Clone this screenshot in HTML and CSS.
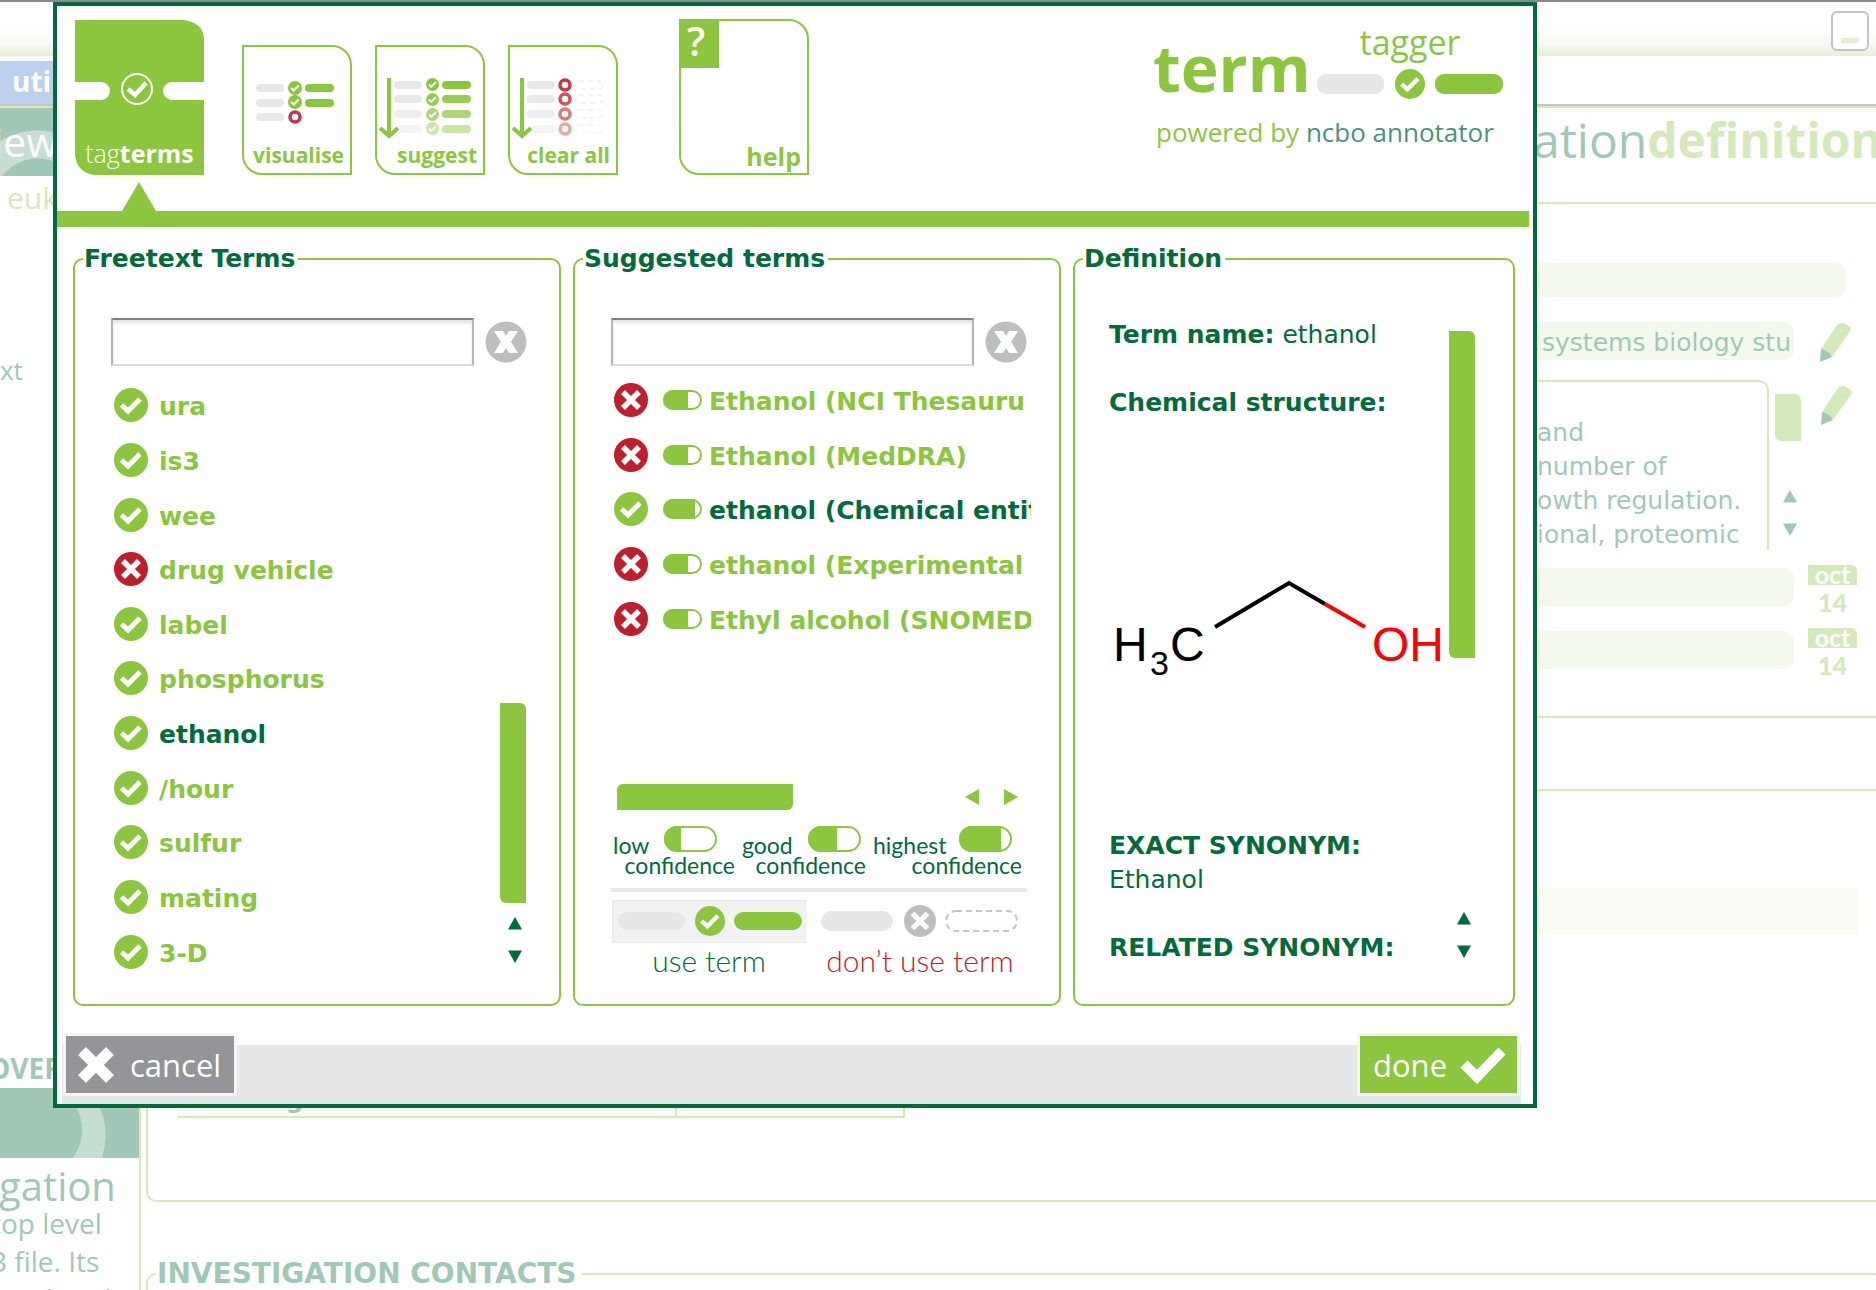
FILE: index.html
```html
<!DOCTYPE html>
<html lang="en">
<head>
<meta charset="utf-8">
<title>Term tagger</title>
<link rel="stylesheet" href="styles.css">
</head>
<body>
<svg class="defs" aria-hidden="true">
  <symbol id="tick" viewBox="0 0 34 34"><circle cx="17" cy="17" r="17" fill="#8cc63f"/><path d="M7.500 17L14 23L26 11" fill="none" stroke="#fff" stroke-width="5"/></symbol>
  <symbol id="cross" viewBox="0 0 34 34"><circle cx="17" cy="17" r="17" fill="currentColor"/><path d="M9 9L25 25M25 9L9 25" fill="none" stroke="#fff" stroke-width="5.500"/></symbol>
  <symbol id="clear" viewBox="0 0 42 42"><circle cx="21" cy="21" r="20.500" fill="#bcbec0"/><path d="M9 10h9l3 5 3-5h9l-7 11 7 11h-9l-3-5-3 5H9l7-11z" fill="#fff"/></symbol>
  <symbol id="pill-good" viewBox="0 0 39 20"><rect x="1" y="1" width="37" height="18" rx="9" fill="#fff" stroke="#8cc63f" stroke-width="2"/><path d="M25 0H10a10 10 0 0 0 0 20h15z" fill="#8cc63f"/></symbol>
  <symbol id="pill-best" viewBox="0 0 39 20"><rect x="1" y="1" width="37" height="18" rx="9" fill="#fff" stroke="#8cc63f" stroke-width="2"/><path d="M32 0H10a10 10 0 0 0 0 20h22z" fill="#8cc63f"/></symbol>
  <symbol id="pencil" viewBox="0 0 31 40"><path d="M1 27L17 3Q21-2 30 5Q32 7 29 11L12 35z" fill="#d5eabb"/><path d="M1 27Q8 28 12 35L0 40z" fill="#a1c8b6"/></symbol>
  <symbol id="up" viewBox="0 0 26 28"><path d="M15 7l7 12.500H8z" fill="currentColor"/></symbol>
  <symbol id="down" viewBox="0 0 26 28"><path d="M15 25l7-12.500H8z" fill="currentColor"/></symbol>
</svg>

<div class="app">
  <header class="titlebar"><button class="minimise" aria-label="Minimise"></button></header>
  <nav class="menubar"><a href="#" class="menu-item">uti</a></nav>
  <div class="workspace">
    <aside class="sidebar">
      <div class="side-head">iew</div>
      <p class="side-organism">euk</p>
      <p class="side-note">xt</p>
      <h2 class="side-title">OVER</h2>
      <svg class="side-art" viewBox="0 0 139 71" preserveAspectRatio="none" aria-hidden="true"><rect width="139" height="71" fill="#a1c8b6"/><path d="M62 0Q96 36 73 71H102Q114 30 86 0z" fill="#c7ded3"/></svg>
      <h3 class="side-topic">gation</h3>
      <p class="side-text">top level<br>3 file. Its<br>is related</p>
    </aside>
    <main class="main">
      <h1 class="page-title"><span>ation</span><b>definition</b></h1>
      <section class="box-details">
        <div class="details">
          <div class="bar bar-wide"></div>
          <div class="row"><div class="bar">systems biology stu</div><svg class="pencil"><use href="#pencil"/></svg></div>
          <div class="row row-text">
            <p class="abstract">and<br>number of<br>owth regulation.<br>ional, proteomic</p>
            <div class="mini-scroll"><div class="mini-thumb"></div>
              <button aria-label="Scroll up"><svg><use href="#up"/></svg></button><button aria-label="Scroll down"><svg><use href="#down"/></svg></button></div>
            <svg class="pencil"><use href="#pencil"/></svg>
          </div>
          <div class="row row-date"><div class="bar"></div><div class="calendar"><span>oct</span><b>14</b></div></div>
          <div class="row row-date"><div class="bar"></div><div class="calendar"><span>oct</span><b>14</b></div></div>
        </div>
      </section>
      <section class="box-publications">
        <div class="band"></div>
        <div class="grid-foot"><span>Investigation</span><span></span></div>
      </section>
      <fieldset class="box-contacts"><legend>INVESTIGATION CONTACTS</legend></fieldset>
    </main>
  </div>

  <div class="dialog" role="dialog" aria-label="Term tagger">
    <header class="dialog-head">
      <button class="tab-current">
        <svg viewBox="0 0 129 155" aria-hidden="true"><path d="M0 0H109Q129 3 129 20V62H97a9 9 0 0 0 0 18H129V155H20Q2 153 0 135V80H26a9 9 0 0 0 0-18H0z" fill="#8cc63f"/><circle cx="62" cy="69" r="15" fill="none" stroke="#fff" stroke-width="2"/><path d="M53 69l7 6 11-12" fill="none" stroke="#fff" stroke-width="4.500"/></svg>
        <span>tag<b>terms</b></span>
      </button>
      <button class="tool">
        <svg viewBox="2 2 106 96" aria-hidden="true"><g fill="#e6e7e8"><rect x="14" y="39" width="28" height="8" rx="4"/><rect x="14" y="54" width="28" height="8" rx="4"/><rect x="14" y="68" width="28" height="8" rx="4"/></g><g fill="#8cc63f"><rect x="63" y="39" width="29" height="8" rx="4"/><rect x="63" y="54" width="29" height="8" rx="4"/></g><use href="#tick" x="46" y="36" width="14" height="14"/><use href="#tick" x="46" y="50" width="14" height="14"/><circle cx="53" cy="72" r="5" fill="none" stroke="#c8354a" stroke-width="3.500"/></svg>
        <span>visualise</span>
      </button>
      <button class="tool">
        <svg viewBox="2 2 106 96" aria-hidden="true"><path d="M14 33V92M5 83l9 8 9-8" fill="none" stroke="#8cc63f" stroke-width="4"/><g><rect x="19" y="36" width="28" height="8" rx="4" fill="#e6e7e8"/><rect x="67" y="36" width="29" height="8" rx="4" fill="#8cc63f"/><use href="#tick" x="51" y="33" width="13" height="13"/></g><g opacity=".9"><rect x="19" y="50" width="28" height="8" rx="4" fill="#e6e7e8"/><rect x="67" y="50" width="29" height="8" rx="4" fill="#8cc63f"/><use href="#tick" x="51" y="48" width="13" height="13"/></g><g opacity=".7"><rect x="19" y="65" width="28" height="8" rx="4" fill="#e6e7e8"/><rect x="67" y="65" width="29" height="8" rx="4" fill="#8cc63f"/><use href="#tick" x="51" y="63" width="13" height="13"/></g><g opacity=".45"><rect x="24" y="80" width="23" height="8" rx="4" fill="#e6e7e8"/><rect x="67" y="80" width="29" height="8" rx="4" fill="#8cc63f"/><use href="#tick" x="51" y="77" width="13" height="13"/></g></svg>
        <span>suggest</span>
      </button>
      <button class="tool">
        <svg viewBox="2 2 106 96" aria-hidden="true"><path d="M14 33V92M5 83l9 8 9-8" fill="none" stroke="#8cc63f" stroke-width="4"/><g fill="#e6e7e8"><rect x="19" y="36" width="28" height="8" rx="4"/><rect x="19" y="50" width="28" height="8" rx="4" opacity=".9"/><rect x="19" y="65" width="28" height="8" rx="4" opacity=".7"/><rect x="24" y="80" width="23" height="8" rx="4" opacity=".45"/></g><g fill="none" stroke="#c8354a" stroke-width="3.500"><circle cx="57" cy="40" r="5"/><circle cx="57" cy="54" r="5" stroke="#d2525a"/><circle cx="57" cy="69" r="5" stroke="#dc7c74"/><circle cx="57" cy="84" r="5" stroke="#e8a99c"/></g><g fill="none" stroke="#e6e7e8" stroke-dasharray="5 4"><rect x="67" y="36" width="28" height="8" rx="4"/><rect x="67" y="50" width="28" height="8" rx="4"/><rect x="67" y="65" width="28" height="8" rx="4" opacity=".8"/><rect x="67" y="80" width="28" height="8" rx="4" opacity=".6"/></g></svg>
        <span>clear all</span>
      </button>
      <button class="tool help"><i>?</i><span>help</span></button>
      <div class="logo">
        <div class="logo-top">
          <span class="logo-term">term</span>
          <div class="logo-side"><span class="logo-tagger">tagger</span>
            <svg viewBox="0 0 186 32" aria-hidden="true"><rect y="6" width="67" height="20" rx="9" fill="#e6e7e8"/><use href="#tick" x="78" y="1" width="30" height="30"/><rect x="118" y="6" width="68" height="20" rx="9" fill="#8cc63f"/></svg></div>
        </div>
        <p class="logo-by">powered by <span>ncbo annotator</span></p>
      </div>
    </header>
    <div class="divider"></div>

    <div class="panels">
      <fieldset class="panel">
        <legend>Freetext Terms</legend>
        <div class="search"><input type="text" aria-label="Filter freetext terms"><button aria-label="Clear filter"><svg><use href="#clear"/></svg></button></div>
        <div class="terms-wrap">
          <ul class="terms">
            <li><button><svg><use href="#tick"/></svg><span>ura</span></button></li>
            <li><button><svg><use href="#tick"/></svg><span>is3</span></button></li>
            <li><button><svg><use href="#tick"/></svg><span>wee</span></button></li>
            <li><button><svg><use href="#cross"/></svg><span>drug vehicle</span></button></li>
            <li><button><svg><use href="#tick"/></svg><span>label</span></button></li>
            <li><button><svg><use href="#tick"/></svg><span>phosphorus</span></button></li>
            <li class="selected"><button><svg><use href="#tick"/></svg><span>ethanol</span></button></li>
            <li><button><svg><use href="#tick"/></svg><span>/hour</span></button></li>
            <li><button><svg><use href="#tick"/></svg><span>sulfur</span></button></li>
            <li><button><svg><use href="#tick"/></svg><span>mating</span></button></li>
            <li><button><svg><use href="#tick"/></svg><span>3-D</span></button></li>
          </ul>
          <div class="scroller scroller-low"><div class="thumb thumb-short"></div>
            <div class="arrows"><button aria-label="Scroll up"><svg><use href="#up"/></svg></button><button aria-label="Scroll down"><svg><use href="#down"/></svg></button></div></div>
        </div>
      </fieldset>

      <fieldset class="panel">
        <legend>Suggested terms</legend>
        <div class="search"><input type="text" aria-label="Filter suggested terms"><button aria-label="Clear filter"><svg><use href="#clear"/></svg></button></div>
        <ul class="terms suggestions">
          <li><button><svg><use href="#cross"/></svg><svg class="pill"><use href="#pill-good"/></svg><span>Ethanol (NCI Thesauru</span></button></li>
          <li><button><svg><use href="#cross"/></svg><svg class="pill"><use href="#pill-good"/></svg><span>Ethanol (MedDRA)</span></button></li>
          <li class="selected"><button><svg><use href="#tick"/></svg><svg class="pill"><use href="#pill-best"/></svg><span>ethanol (Chemical entit</span></button></li>
          <li><button><svg><use href="#cross"/></svg><svg class="pill"><use href="#pill-good"/></svg><span>ethanol (Experimental</span></button></li>
          <li><button><svg><use href="#cross"/></svg><svg class="pill"><use href="#pill-good"/></svg><span>Ethyl alcohol (SNOMED</span></button></li>
        </ul>
        <div class="hscroll"><div class="hthumb"></div>
          <button aria-label="Scroll left"><svg viewBox="0 0 14 16"><path d="M0 8L14 0V16z" fill="#8cc63f"/></svg></button>
          <button aria-label="Scroll right"><svg viewBox="0 0 14 16"><path d="M14 8L0 0V16z" fill="#8cc63f"/></svg></button></div>
        <div class="key">
          <div class="key-item key-low"><div class="key-row"><span>low</span><svg viewBox="0 0 53 26"><rect x="1" y="1" width="51" height="24" rx="12" fill="#fff" stroke="#8cc63f" stroke-width="2"/><path d="M17 0H13a13 13 0 0 0 0 26h4z" fill="#8cc63f"/></svg></div><span>confidence</span></div>
          <div class="key-item key-good"><div class="key-row"><span>good</span><svg viewBox="0 0 53 26"><rect x="1" y="1" width="51" height="24" rx="12" fill="#fff" stroke="#8cc63f" stroke-width="2"/><path d="M29 0H13a13 13 0 0 0 0 26h16z" fill="#8cc63f"/></svg></div><span>confidence</span></div>
          <div class="key-item"><div class="key-row"><span>highest</span><svg viewBox="0 0 53 26"><rect x="1" y="1" width="51" height="24" rx="12" fill="#fff" stroke="#8cc63f" stroke-width="2"/><path d="M42 0H13a13 13 0 0 0 0 26h29z" fill="#8cc63f"/></svg></div><span>confidence</span></div>
        </div>
        <hr class="key-line">
        <div class="choices">
          <figure><svg viewBox="0 0 194 43" aria-hidden="true"><rect x=".500" y=".500" width="193" height="42" fill="#f2f2f2" stroke="#e9e9ea"/><rect x="6" y="12" width="67" height="18" rx="9" fill="#e6e7e8"/><use href="#tick" x="83" y="6" width="30" height="30"/><rect x="122" y="12" width="68" height="18" rx="9" fill="#8cc63f"/></svg><figcaption>use term</figcaption></figure>
          <figure class="dont"><svg viewBox="0 0 198 43" aria-hidden="true"><rect y="11" width="72" height="20" rx="10" fill="#e6e7e8"/><use href="#cross" x="83" y="5" width="32" height="32" color="#bcbec0"/><rect x="125" y="11" width="71" height="20" rx="10" fill="none" stroke="#c4c5c7" stroke-width="2" stroke-dasharray="6 4"/></svg><figcaption>don’t use term</figcaption></figure>
        </div>
      </fieldset>

      <fieldset class="panel panel-definition">
        <legend>Definition</legend>
        <div class="definition">
          <p><b>Term name:</b> ethanol</p>
          <p class="spaced"><b>Chemical structure:</b></p>
          <svg class="molecule" viewBox="0 0 340 409" role="img" aria-label="Structure of ethanol">
            <path d="M106 207L180 163L216 184" fill="none" stroke="#000" stroke-width="4"/><path d="M216 184L256 207" stroke="#f00" stroke-width="4"/>
            <text x="4" y="241" font-size="48">H</text><text x="41" y="255" font-size="34">3</text><text x="61" y="241" font-size="48">C</text><text x="263" y="241" font-size="48" fill="#f00">OH</text>
          </svg>
          <p><b>EXACT SYNONYM:</b></p>
          <p>Ethanol</p>
          <p class="spaced"><b>RELATED SYNONYM:</b></p>
        </div>
        <div class="scroller"><div class="thumb thumb-long"></div>
          <div class="arrows"><button aria-label="Scroll up"><svg><use href="#up"/></svg></button><button aria-label="Scroll down"><svg><use href="#down"/></svg></button></div></div>
      </fieldset>
    </div>

    <footer class="dialog-foot">
      <button class="cancel"><svg viewBox="0 0 38 38" aria-hidden="true"><path d="M5 5L33 33M33 5L5 33" stroke="#fff" stroke-width="11"/></svg>cancel</button>
      <button class="done">done<svg viewBox="0 0 46 38" aria-hidden="true"><path d="M4 18L17 31L42 5" fill="none" stroke="#fff" stroke-width="10"/></svg></button>
    </footer>
  </div>
</div>
</body>
</html>
```

FILE: styles.css
```css
:root {
  --dark: #036b3b;
  --green: #8cc63f;
  --faded-dark: #a1c8b6;
  --faded-green: #d5eabb;
  --faded-fill: #f4f9ee;
  --human: "Open Sans", "Noto Sans", sans-serif;
  --wide: "DejaVu Sans", "Liberation Sans", sans-serif;
}
* { box-sizing: border-box; }
body { margin: 0; background: #fff; font-family: var(--wide); font-size: 25px; }
h1, h2, h3, p, ul, figure { margin: 0; padding: 0; }
button { padding: 0; border: 0; background: none; font: inherit; color: inherit; cursor: pointer; }
svg { display: block; flex: none; }
fieldset { margin: 0; min-width: 0; }
.defs { position: absolute; width: 0; height: 0; }

/* Faded application behind the dialog */
.app { position: relative; display: flex; flex-direction: column; height: 100vh; min-height: 1120px; overflow: hidden; }
.titlebar { flex: none; display: flex; justify-content: flex-end; align-items: flex-start; height: 56px; padding: 9px 7px 0 0; border-top: 2px solid #8a8a8a; background: linear-gradient(#fff 45%, #f8f9f6 75%, #e4f1d6); }
.minimise { display: flex; justify-content: center; align-items: flex-end; width: 38px; height: 40px; padding-bottom: 6px; border: 2px solid #c4c4c4; border-radius: 6px; background: #fff; }
.minimise::after { content: ""; width: 18px; height: 5px; background: #e2f0d2; }
.menubar { flex: none; display: flex; height: 52px; padding-top: 5px; border-bottom: 2px solid var(--faded-green); box-shadow: inset 0 -2px #c6c6c6; }
.menu-item { width: 120px; height: 43px; padding-left: 12px; background: #bcd1ee; color: #fff; font: bold 28px/40px var(--human); text-decoration: none; }
.workspace { flex: 1; display: flex; min-height: 0; }
.sidebar { flex: none; width: 141px; border-right: 2px solid var(--faded-green); color: var(--faded-dark); font-family: var(--human); overflow: hidden; }
.side-head { height: 68px; background: radial-gradient(circle at 38px 96px, #a1c8b6 45px, #c7ded3 46px 73px, #a1c8b6 74px); color: #fff; font-size: 41px; line-height: 66px; text-indent: -7px; }
.side-organism { padding: 2px 0 0 7px; color: var(--faded-green); font-size: 30px; line-height: 40px; }
.side-note { padding-top: 132px; font: 26px/40px var(--human); }
.side-title { padding-top: 658px; font-size: 28px; line-height: 40px; text-indent: -12px; }
.side-art { width: 100%; height: 70px; }
.side-topic { padding-top: 6px; font-size: 40px; font-weight: normal; line-height: 44px; text-indent: -1px; }
.side-text { margin: -4px 0 0 -9px; font-size: 28px; line-height: 38px; }
.main { flex: 1; min-width: 0; padding-left: 5px; }
.page-title { display: flex; justify-content: flex-start; width: 343px; margin-left: auto; height: 94px; font: 48px/64px var(--human); color: var(--faded-dark); white-space: nowrap; }
.page-title b { color: var(--faded-green); }
.box-details { height: 516px; border: solid var(--faded-green); border-width: 2px 0 2px 2px; }
.details { display: flex; flex-direction: column; width: 345px; margin-left: auto; padding-top: 59px; }
.row { display: flex; margin-top: 25px; }
.bar { width: 263px; height: 38px; padding-left: 11px; border-radius: 10px; background: var(--faded-fill); color: var(--faded-dark); font-size: 25px; line-height: 42px; white-space: nowrap; overflow: hidden; }
.bar-wide { width: 315px; height: 34px; }
.pencil { width: 31px; height: 40px; margin-left: 26px; }
.row-text { height: 170px; margin-top: 18px; }
.abstract { width: 238px; padding: 34px 0 0 6px; border: solid var(--faded-green); border-width: 2px 2px 0 0; border-radius: 0 10px 0 0; color: var(--faded-dark); font-size: 25px; line-height: 34px; white-space: nowrap; }
.mini-scroll { display: flex; flex-direction: column; width: 26px; margin: 14px -6px 0 6px; color: var(--faded-dark); }
.mini-scroll svg { width: 26px; height: 28px; }
.mini-thumb { height: 47px; margin-bottom: 42px; border-radius: 0 6px 0 6px; background: var(--faded-green); }
.row-text .pencil { margin-top: 5px; }
.row-date { margin-top: 18px; height: 45px; }
.calendar { width: 49px; margin: -3px 0 0 14px; color: var(--faded-green); font: bold 25px/24px Lato, var(--human); text-align: center; }
.calendar span { display: block; height: 20px; border-radius: 0 6px 0 0; background: var(--faded-green); color: #fff; line-height: 18px; }
.calendar b { display: block; line-height: 34px; }
.box-publications { display: flex; flex-direction: column; height: 413px; margin-top: 71px; border: solid var(--faded-green); border-width: 2px 0 2px 2px; border-radius: 0 0 0 10px; }
.band { width: 350px; height: 47px; margin: 97px 18px 0 auto; background: #f9fbf5; }
.grid-foot { display: grid; grid-template-columns: 500px 226px; width: 728px; height: 80px; margin: auto 0 82px 29px; border-right: 2px solid var(--faded-green); border-bottom: 2px solid var(--faded-green); background: #f9fbf5; color: var(--faded-dark); font: bold 25px/32px var(--wide); align-items: end; }
.grid-foot span { height: 100%; padding: 46px 0 0 13px; border-right: 2px solid var(--faded-green); }
.grid-foot span + span { border: 0; }
.box-contacts { margin-top: 56px; padding: 0; height: 90px; border: solid var(--faded-green); border-width: 2px 0 2px 2px; border-radius: 10px 0 0 10px; }
.box-contacts legend { margin-left: 8px; padding: 0 5px 0 1px; color: var(--faded-dark); font-size: 28px; font-weight: bold; line-height: 32px; }

/* Dialog */
.dialog { position: absolute; top: 2px; left: 53px; right: 339px; border: 4px solid var(--dark); background: #fff; color: var(--dark); }
.dialog-head { display: flex; align-items: flex-end; padding: 13px 30px 36px 18px; }
.tab-current { position: relative; display: flex; flex-direction: column; align-items: center; width: 129px; height: 155px; color: #fff; }
.tab-current svg { width: 129px; height: 155px; margin-bottom: -38px; }
.tab-current span { font: 300 25px/32px var(--human); }
.tab-current b { font-weight: 700; }
.tab-current::after { content: ""; position: absolute; top: 162px; left: 47px; border: solid transparent; border-width: 0 17px 29px; border-bottom-color: var(--green); }
.tool { width: 110px; height: 130px; margin-left: 23px; padding-right: 6px; border: 2px solid var(--green); border-radius: 0 20px 0 20px; color: var(--green); font: bold 21px/24px var(--human); text-align: right; }
.tab-current + .tool { margin-left: 38px; }
.tool svg { width: 106px; height: 96px; }
.tool span { display: block; padding-bottom: 6px; }
.help { display: flex; flex-direction: column; justify-content: space-between; width: 130px; height: 156px; margin-left: 61px; font-size: 25px; line-height: 28px; }
.help i { width: 40px; height: 49px; margin: -2px 0 0 -2px; padding-right: 6px; background: var(--green); color: #fff; font: 600 40px/44px var(--human); text-align: center; }
.tool.help span { align-self: flex-end; padding-bottom: 3px; }
.logo { align-self: flex-start; margin: 2px 0 0 auto; font-family: var(--human); color: var(--green); }
.logo-top { display: flex; align-items: flex-end; justify-content: space-between; width: 350px; }
.logo-term { font-size: 64px; font-weight: 700; line-height: 64px; }
.logo-side { display: flex; flex-direction: column; align-items: center; }
.logo-tagger { font-size: 34px; line-height: 42px; }
.logo-side svg { width: 186px; height: 32px; margin-top: 5px; }
.logo-by { margin-top: 16px; padding-left: 3px; font-size: 26px; line-height: 32px; white-space: nowrap; }
.logo-by span { color: #4d9375; }
.divider { height: 16px; margin-right: 4px; background: var(--green); }

.panels { display: grid; grid-template-columns: 488fr 488fr 442fr; gap: 12px; padding: 18px 18px 0 16px; }
.panel { display: flex; flex-direction: column; padding: 45px 32px 25px 36px; border: 2px solid var(--green); border-radius: 10px; }
.panel legend { margin-left: -28px; padding: 0 3px 0 1px; font-weight: bold; line-height: 28px; }
.search { display: flex; align-items: center; gap: 11px; }
.search input { flex: 1; min-width: 0; height: 48px; padding: 0 8px; border: 2px solid; border-color: #7f7f7f #b5b5b5 #dcdcdc; box-shadow: inset 0 3px 3px #e4e4e4; font: inherit; color: var(--dark); }
.search svg { width: 42px; height: 42px; }
.terms-wrap { display: flex; margin-top: 12px; }
.terms { flex: 1; display: grid; grid-auto-rows: 1fr; min-width: 0; height: 601px; list-style: none; color: var(--green); font-size: 25px; font-weight: bold; line-height: 30px; }
.terms li { display: flex; min-width: 0; overflow: hidden; }
.terms button { display: flex; align-items: center; gap: 11px; padding-left: 3px; white-space: nowrap; }
.terms svg { width: 34px; height: 34px; color: #be1e2d; }
.terms span { padding-top: 4px; }
.terms .selected { color: var(--dark); }
.suggestions { flex: none; height: 273px; margin: 7px -4px 0 0; }
.suggestions button { gap: 0; }
.terms .pill { width: 39px; height: 20px; margin: 0 7px 0 15px; }
.scroller { flex: none; display: flex; flex-direction: column; width: 26px; }
.scroller-low { margin-right: 1px; padding-bottom: 13px; }
.scroller-low .thumb { margin-top: auto; }
.thumb { background: var(--green); border-radius: 0 6px 0 6px; }
.thumb-short { height: 200px; }
.thumb-long { height: 327px; margin-top: 13px; }
.arrows { padding-top: 7px; }
.arrows button, .mini-scroll button { display: block; }
.arrows svg { width: 26px; height: 28px; }
.hscroll { display: flex; align-items: center; height: 26px; margin: auto 9px 0 6px; }
.hthumb { width: 176px; height: 26px; margin-right: auto; border-radius: 6px 0 6px 0; background: var(--green); }
.hscroll button + button { margin-left: 25px; }
.hscroll svg { width: 14px; height: 16px; }
.key { display: flex; justify-content: space-between; margin: 15px 5px 0 2px; font: 23px/24px Lato, var(--human); }
.key-item { display: flex; flex-direction: column; align-items: flex-end; width: 149px; }
.key-low { width: 122px; }
.key-good { width: 124px; }
.key-row { display: flex; justify-content: space-between; align-items: flex-end; align-self: stretch; height: 28px; padding-right: 10px; line-height: 16px; }
.key-low .key-row { padding-right: 18px; }
.key-good .key-row { padding-right: 5px; }
.key-row svg { width: 53px; height: 26px; align-self: center; }
.key-line { width: 100%; height: 4px; margin: 11px 0 8px; border: 0; background: #e6e7e8; }
.choices { display: flex; justify-content: space-between; margin: 0 8px 2px 1px; color: var(--dark); font: 300 30px/34px Lato, var(--human); text-align: center; }
.choices figure:first-child svg { width: 194px; height: 43px; }
.dont svg { width: 198px; height: 43px; }
.dont { color: #be1e2d; }
.panel-definition { flex-direction: row; padding: 45px 38px 26px 34px; }
.panel-definition legend { margin-left: -26px; }
.definition { flex: 1; min-width: 0; line-height: 34px; }
.spaced { margin-top: 34px; }
.molecule { width: 340px; height: 409px; font-family: "Liberation Sans", Arial, sans-serif; }
.panel-definition .arrows { margin-top: auto; padding-bottom: 17px; }

.dialog-foot { display: flex; justify-content: space-between; height: 59px; margin: 39px 12px 0 5px; padding: 0 4px; background: #e6e7e8; }
.dialog-foot button { display: flex; align-items: center; height: 57px; margin-top: -9px; box-shadow: 0 0 0 3px #f4f4f5; color: #fff; font: 31px/40px var(--human); }
.cancel { width: 168px; padding-left: 11px; gap: 15px; background: #939598; }
.cancel svg { width: 38px; height: 38px; }
.done { width: 157px; padding-left: 13px; gap: 13px; background: var(--green); }
.done svg { width: 46px; height: 38px; }
```
